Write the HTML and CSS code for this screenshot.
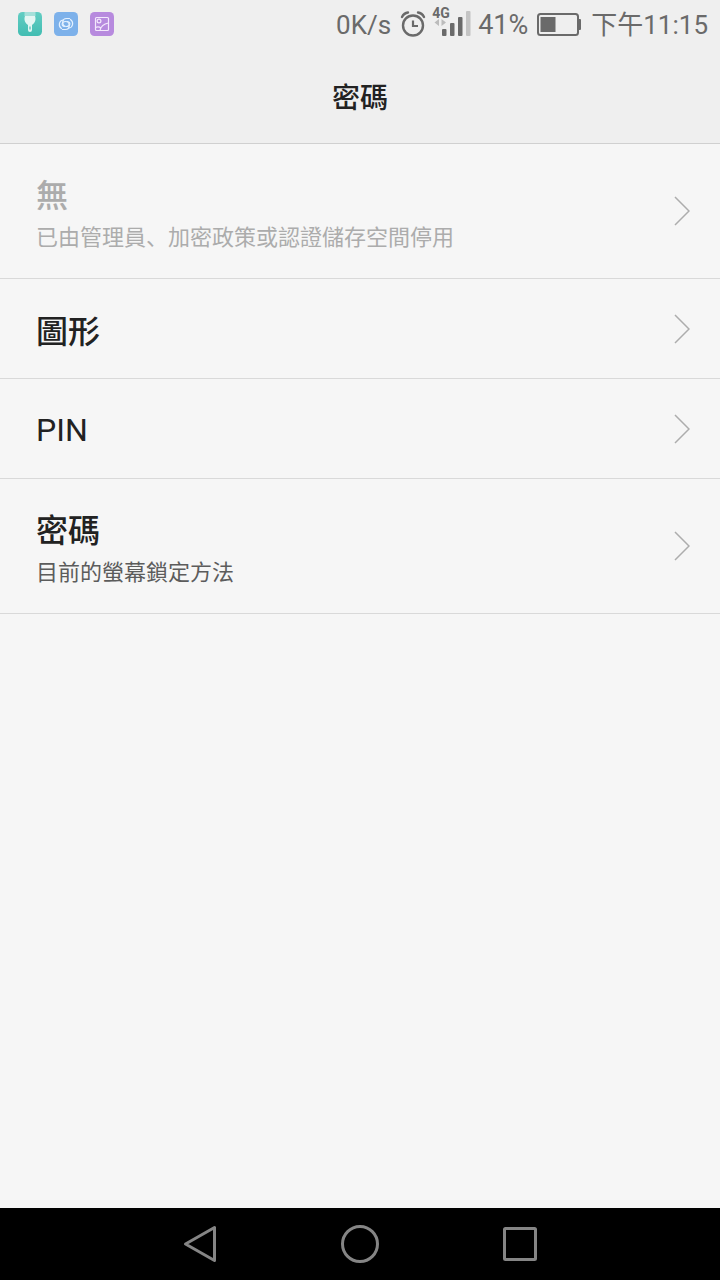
FILE: index.html
```html
<!DOCTYPE html>
<html lang="zh">
<head>
<meta charset="utf-8">
<meta name="viewport" content="width=device-width, initial-scale=1">
<title>密碼</title>
<link rel="stylesheet" href="styles.css">
</head>
<body>
<div class="screen">
  <div class="status-bar">
    <div class="notifications">
      <svg class="app-icon" viewBox="0 0 24 24" aria-hidden="true">
        <defs><linearGradient id="teal" x1="0" y1="0" x2="0" y2="1"><stop offset="0" stop-color="#62cdc3"/><stop offset="1" stop-color="#42bdb2"/></linearGradient></defs>
        <rect width="24" height="24" rx="4.500" fill="url(#teal)"/>
        <path d="M6.500 0h11v4h-11z" fill="#a5e0da"/>
        <path d="M7 4h10c1.500 4-.5 7.500-3 9V18q0 2-2 2t-2-2v-5C7.500 11.500 5.500 8 7 4z" fill="#e4f6f3"/>
        <path d="M11.400 14.500h1.200v3h-1.200z" fill="#48bfb4"/>
      </svg>
      <svg class="app-icon" viewBox="0 0 24 24" aria-hidden="true">
        <rect width="24" height="24" rx="4.500" fill="#7db1ea"/>
        <g fill="none" stroke="#e4f1ff" stroke-width="1.200" stroke-linecap="round">
          <path id="swirl" d="M15.500 6.500H12.500C7.500 6.500 7.500 14.500 12.500 14.500c4 0 4.500-4.500 1-5M16.500 7.500c3.500 2.500 2.500 8-1.500 8.500"/>
          <use href="#swirl" transform="rotate(180 12 12)"/>
        </g>
      </svg>
      <svg class="app-icon" viewBox="0 0 24 24" aria-hidden="true">
        <rect width="24" height="24" rx="4.500" fill="#b78ade"/>
        <g fill="none" stroke="#f3e8fc" stroke-width="1.200">
          <rect x="5.500" y="5.500" width="13" height="13" rx="1"/>
          <circle cx="9" cy="9" r="1.900"/>
          <path d="M10 18.500q1-6 8.500-7.500M5.500 15.500q3-1.500 5.500.5"/>
        </g>
      </svg>
    </div>
    <div class="system">
      <span class="speed">0K/s</span>
      <svg class="alarm" viewBox="0 0 26 28" aria-hidden="true">
        <g fill="none" stroke="#6a6a6a" stroke-linecap="round">
          <circle cx="13" cy="15.500" r="10" stroke-width="2.400"/>
          <path d="M2 7q2-4 6-4.500M24 7q-2-4-6-4.500" stroke-width="2.400"/>
          <path d="M13 10.500V16h5" stroke-width="2.200" stroke-linecap="butt"/>
        </g>
      </svg>
      <div class="signal">
        <span class="network">4G</span>
        <svg class="bars" viewBox="0 0 40 26" aria-hidden="true">
          <path d="M7 8v7L2.500 11.500zM9.500 8v7l4.500-3.500z" fill="#bcbcbc"/>
          <g fill="#6a6a6a"><rect x="10" y="18" width="4.500" height="7" rx="1"/><rect x="18" y="12" width="4.500" height="13" rx="1"/><rect x="26" y="6" width="4.500" height="19" rx="1"/></g>
          <rect x="34" y="0" width="4.500" height="25" rx="1" fill="#c4c4c4"/>
        </svg>
      </div>
      <span class="percent">41%</span>
      <svg class="battery" viewBox="0 0 46 24" aria-hidden="true">
        <rect x="2" y="2" width="40" height="21" rx="2.500" fill="none" stroke="#6a6a6a" stroke-width="2"/>
        <rect x="4.500" y="5" width="15" height="15" fill="#6a6a6a"/>
        <path d="M42 7h2q1 0 1 1v9q0 1-1 1h-2z" fill="#6a6a6a"/>
      </svg>
      <time class="clock">下午11:15</time>
    </div>
  </div>
  <header class="header"><h1 class="title">密碼</h1></header>
  <main class="options">
    <button class="option" type="button" disabled>
      <span class="text"><span class="name">無</span><span class="note">已由管理員、加密政策或認證儲存空間停用</span></span>
      <svg class="chevron" viewBox="0 0 16 30" aria-hidden="true"><path d="M1 1l14 14L1 29"/></svg>
    </button>
    <button class="option" type="button">
      <span class="text"><span class="name">圖形</span></span>
      <svg class="chevron" viewBox="0 0 16 30" aria-hidden="true"><path d="M1 1l14 14L1 29"/></svg>
    </button>
    <button class="option" type="button">
      <span class="text"><span class="name latin">PIN</span></span>
      <svg class="chevron" viewBox="0 0 16 30" aria-hidden="true"><path d="M1 1l14 14L1 29"/></svg>
    </button>
    <button class="option" type="button">
      <span class="text"><span class="name">密碼</span><span class="note">目前的螢幕鎖定方法</span></span>
      <svg class="chevron" viewBox="0 0 16 30" aria-hidden="true"><path d="M1 1l14 14L1 29"/></svg>
    </button>
  </main>
  <nav class="nav-bar">
    <button class="nav-button" type="button" aria-label="返回"><svg class="nav-icon" viewBox="0 0 40 40" aria-hidden="true"><path d="M5.500 20L34.500 3.500v33z"/></svg></button>
    <button class="nav-button" type="button" aria-label="主畫面"><svg class="nav-icon" viewBox="0 0 40 40" aria-hidden="true"><circle cx="20" cy="20" r="17.500"/></svg></button>
    <button class="nav-button" type="button" aria-label="最近使用"><svg class="nav-icon" viewBox="0 0 40 40" aria-hidden="true"><rect x="4.500" y="4.500" width="31" height="31" rx="1"/></svg></button>
  </nav>
</div>
</body>
</html>
```
FILE: styles.css
```css
* { box-sizing: border-box; }

body {
  margin: 0;
  background: #f6f6f6;
  color: #222;
  font-family: Roboto, "Noto Sans CJK SC", "Noto Sans CJK TC", sans-serif;
}

button {
  margin: 0;
  border: 0;
  background: none;
  color: inherit;
  font: inherit;
}

svg { display: block; flex: none; }

.screen {
  display: flex;
  flex-direction: column;
  min-height: 100vh;
}

.status-bar {
  display: flex;
  align-items: center;
  justify-content: space-between;
  height: 48px;
  padding: 0 12px 0 18px;
  background: #efefef;
  color: #6a6a6a;
  font-size: 26px;
  line-height: 48px;
  white-space: nowrap;
}

.notifications { display: flex; gap: 12px; }

.app-icon { width: 24px; height: 24px; }

.system { display: flex; align-items: center; }

.speed, .percent, .clock { padding-top: 2px; }

.percent { font-size: 27px; }

.alarm { width: 26px; height: 28px; margin: 0 6px 0 9px; }

.signal {
  position: relative;
  width: 40px;
  margin-right: 6px;
}

.network {
  position: absolute;
  top: -5px;
  left: 0;
  font-size: 14px;
  font-weight: 700;
  line-height: 14px;
}

.bars { width: 40px; height: 26px; }

.battery { width: 46px; height: 24px; margin: 0 9px 0 8px; }

.header {
  display: flex;
  align-items: center;
  justify-content: center;
  height: 96px;
  padding-top: 6px;
  border-bottom: 1px solid #d0d0d0;
  background: #efefef;
}

.title {
  margin: 0;
  font-size: 28px;
  font-weight: 500;
  line-height: 40px;
}

.options { flex: 1; }

.option {
  display: flex;
  align-items: center;
  justify-content: space-between;
  width: 100%;
  min-height: 100px;
  padding: 22px 30px 22px 36px;
  border-bottom: 1px solid #d9d9d9;
  text-align: left;
}

.text {
  display: flex;
  flex-direction: column;
  padding-top: 6px;
}

.name {
  font-size: 32px;
  font-weight: 500;
  line-height: 48px;
}

.name.latin {
  padding-bottom: 4px;
  font-weight: 400;
  line-height: 44px;
}

.note {
  color: #5c5c5c;
  font-size: 22px;
  line-height: 36px;
}

.option:disabled, .option:disabled .note { color: #acacac; }

.chevron {
  width: 16px;
  height: 30px;
  fill: none;
  stroke: #adadad;
  stroke-width: 1.5;
}

.nav-bar {
  display: flex;
  justify-content: center;
  height: 72px;
  background: #000;
}

.nav-button {
  display: flex;
  align-items: center;
  justify-content: center;
  width: 160px;
}

.nav-icon {
  width: 40px;
  height: 40px;
  fill: none;
  stroke: #858585;
  stroke-width: 3;
  stroke-linejoin: round;
}
```
